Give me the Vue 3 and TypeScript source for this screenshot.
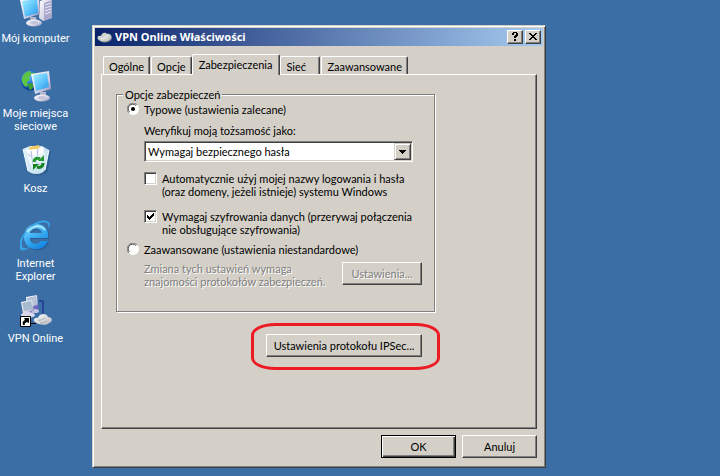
<script setup lang="ts">
import { ref } from 'vue'

interface Shortcut {
  id: string
  label: string
}

const shortcuts: Shortcut[] = [
  { id: 'computer', label: 'Mój komputer' },
  { id: 'network', label: 'Moje miejsca sieciowe' },
  { id: 'bin', label: 'Kosz' },
  { id: 'explorer', label: 'Internet Explorer' },
  { id: 'vpn', label: 'VPN Online' },
]

const tabs: string[] = ['Ogólne', 'Opcje', 'Zabezpieczenia', 'Sieć', 'Zaawansowane']
const activeTab = ref('Zabezpieczenia')
const mode = ref<'typical' | 'advanced'>('typical')
const identity = ref('secured')
const useWindowsLogon = ref(false)
const requireEncryption = ref(true)
</script>

<template>
  <div class="desktop">
    <svg class="defs" aria-hidden="true">
      <defs>
        <linearGradient id="screen" x1="0" y1="0" x2="1" y2="1">
          <stop offset="0" stop-color="#a8f0ff" />
          <stop offset="0.5" stop-color="#62c8fb" />
          <stop offset="1" stop-color="#2b93ee" />
        </linearGradient>
        <linearGradient id="metal" x1="0" y1="0" x2="1" y2="1">
          <stop offset="0" stop-color="#ffffff" />
          <stop offset="0.6" stop-color="#d5d5e6" />
          <stop offset="1" stop-color="#8583ad" />
        </linearGradient>
        <radialGradient id="globe" cx="0.4" cy="0.3" r="0.7">
          <stop offset="0" stop-color="#66bdf8" />
          <stop offset="0.6" stop-color="#1c67cf" />
          <stop offset="1" stop-color="#0b2f86" />
        </radialGradient>
        <linearGradient id="glass" x1="0" y1="0" x2="1" y2="1">
          <stop offset="0" stop-color="#e9f7fd" />
          <stop offset="1" stop-color="#a9cfe6" />
        </linearGradient>
        <linearGradient id="blueE" x1="0" y1="0" x2="0.6" y2="1">
          <stop offset="0" stop-color="#9be3ff" />
          <stop offset="0.5" stop-color="#3fb2f4" />
          <stop offset="1" stop-color="#1687e0" />
        </linearGradient>
        <linearGradient id="cloud" x1="0" y1="0" x2="1" y2="1">
          <stop offset="0" stop-color="#ffffff" />
          <stop offset="1" stop-color="#b4b8bc" />
        </linearGradient>
      </defs>
    </svg>

    <nav class="shortcuts" aria-label="Pulpit">
      <a v-for="item in shortcuts" :key="item.id" class="shortcut" href="#">
        <svg class="picture" viewBox="0 0 32 32" aria-hidden="true">
          <template v-if="item.id === 'computer'">
            <path d="M20 6l8-3 4 2v18l-9 3-4-3z" fill="url(#metal)" />
            <path d="M24 8l8-3v18l-8 3z" fill="#aaa8cd" />
            <path d="M25 10l6-2M25 13l6-2M25 16l6-2M25 19l6-2" stroke="#e8e8f8" />
            <path d="M0 5l19-3 1 17-16 5z" fill="url(#metal)" />
            <path d="M2 6l15-2 1 14-13 4z" fill="url(#screen)" />
            <path d="M10 22h6l1 5h-6z" fill="#b7b6d2" />
            <ellipse cx="14" cy="28" rx="8" ry="3.5" fill="url(#metal)" />
            <ellipse cx="14" cy="27.5" rx="4" ry="1.5" fill="#c4c3dc" />
          </template>
          <template v-else-if="item.id === 'network'">
            <circle cx="10.5" cy="10.5" r="10" fill="url(#globe)" />
            <path d="M2 7c2-4 5-6 8-6l2 3-3 3 1 3-3 2 1 3-2 2c-3-2-5-6-4-10z" fill="#5fc443" />
            <path d="M13 2c3 1 5 3 6 5l-4 1-3-3zM8 14l4-1 2 3-3 4c-2 0-3-3-3-6z" fill="#3b9f31" />
            <path d="M11 4l18-3 2 18-16 5z" fill="url(#metal)" />
            <path d="M13 5l14-2 2 14-13 4z" fill="url(#screen)" />
            <path d="M20 22h6v5h-6z" fill="#b3b2d0" />
            <ellipse cx="22" cy="28" rx="8" ry="3.5" fill="url(#metal)" />
            <ellipse cx="22" cy="27.5" rx="4" ry="1.5" fill="#c4c3dc" />
          </template>
          <template v-else-if="item.id === 'bin'">
            <path d="M4 6l22-3 5 3-3 20c-3 5-15 6-19 2z" fill="#1d4372" opacity="0.35" />
            <path d="M3 4l7-3h12l7 4-4 20c-3 5-13 5-17 1z" fill="url(#glass)" />
            <path d="M9 2l10-2 2 10-11 2z" fill="#f5cb67" />
            <path d="M7 5l10-1 6-2 2 12-12 9-5-8z" fill="#ffffff" />
            <path d="M11 6l2 15M18 4l-2 15M8 9l12 11" stroke="#a9b1da" fill="none" />
            <path d="M3 4l5 7 8-1 13-5-4 20c-3 5-13 5-17 1z" fill="#dceff8" opacity="0.5" />
            <path d="M14 17c0-3 3-5 6-3" stroke="#24982f" stroke-width="3" fill="none" />
            <path d="M18 16h6v-6z" fill="#24982f" />
            <path d="M23 18c0 4-3 5-6 4" stroke="#15851f" stroke-width="3" fill="none" />
            <path d="M19 19h-6v6z" fill="#15851f" />
            <path d="M3 4l5 22M29 5l-4 20" stroke="#f5fdff" fill="none" />
          </template>
          <template v-else-if="item.id === 'explorer'">
            <path d="M10 18h18c3-18-24-19-24-1 0 15 20 16 24 4h-7c-4 5-11 3-11-3zm0-5c2-6 11-6 12 0z" fill="#153d73" opacity="0.4" fill-rule="evenodd" transform="translate(1 1)" />
            <path d="M10 18h18c3-18-24-19-24-1 0 15 20 16 24 4h-7c-4 5-11 3-11-3zm0-5c2-6 11-6 12 0z" fill="url(#blueE)" fill-rule="evenodd" />
            <path d="M9 7c8-7 17-8 20-5 1 1 1 4-1 7 1-3 0-5-1-6-3-2-10 0-16 5-7 6-10 13-9 18 1 4 6 2 9 0-4 4-9 6-11 3-3-5 2-15 9-22z" fill="#36a5e7" />
            <path d="M7 12c4-6 13-8 18-2" stroke="#b9eeff" fill="none" stroke-width="1.5" />
          </template>
          <template v-else>
            <path d="M19 6h4v13" stroke="#101a8f" fill="none" />
            <path d="M6 2l11-2 1 11-11 3z" fill="url(#metal)" />
            <path d="M7 3l9-2 1 8-9 2z" fill="#b5c4d6" />
            <path d="M13 11l5-1 1 4-5 3z" fill="#6f66c4" />
            <ellipse cx="15" cy="16" rx="4" ry="2" fill="#c5c4e3" />
            <path d="M1 7l11-2 2 11-11 3z" fill="url(#metal)" />
            <path d="M2 8l9-2 2 8-9 2z" fill="#a8bbce" />
            <path d="M7 18l5-2v4l-4 1z" fill="#7770c5" />
            <ellipse cx="8" cy="20" rx="7" ry="3" fill="#d9d8ec" />
            <path d="M11 28.5h5" stroke="#000000" />
            <path d="M15 27c-3-2 0-5 3-4 1-5 9-5 10-1 5 0 5 5 1 6-2 3-11 2-14-1z" fill="url(#cloud)" />
            <path d="M18 25c3 1 5-1 7-2M20 28c3 0 5-1 7-2" stroke="#aab0b5" fill="none" />
            <path d="M0.5 21.5h10v10h-10z" fill="#ffffff" stroke="#000000" />
            <path d="M3 30c-1-3 0-4 2-5l-1-2h5v5l-2-1c-2 1-3 2-2 3z" fill="#000000" />
          </template>
        </svg>
        <span class="caption">{{ item.label }}</span>
      </a>
    </nav>

    <main class="window" role="dialog" aria-labelledby="window-title">
      <header class="titlebar">
        <svg class="title-icon" viewBox="0 0 16 16" aria-hidden="true">
          <path d="M2 11c-3-2-1-5 2-4 1-4 5-4 6-2 4-1 5 3 3 5-2 3-9 3-11 1z" fill="#8f9494" transform="translate(1 1)" />
          <path d="M2 11c-3-2-1-5 2-4 1-4 5-4 6-2 4-1 5 3 3 5-2 3-9 3-11 1z" fill="#d0d4d0" />
          <path d="M4 10c3 0 5-2 7-4" stroke="#f4f6f4" fill="none" />
        </svg>
        <h1 id="window-title" class="title">VPN Online Właściwości</h1>
        <button class="caption-button" type="button" aria-label="Pomoc">
          <svg viewBox="0 0 10 10" aria-hidden="true" shape-rendering="crispEdges">
            <path d="M3 0h4v1h1v3h-1v1h-1v1h-2v-2h1v-1h1v-2h-2v2h-2v-2h1zM4 7h2v2h-2z" />
          </svg>
        </button>
        <button class="caption-button" type="button" aria-label="Zamknij">
          <svg viewBox="0 0 10 10" aria-hidden="true" shape-rendering="crispEdges">
            <path d="M1 1h2v1h1v1h2v-1h1v-1h2v1h-1v1h-1v1h-1v1h1v1h1v1h1v1h-2v-1h-1v-1h-2v1h-1v1h-2v-1h1v-1h1v-1h1v-1h-1v-1h-1v-1h-1z" />
          </svg>
        </button>
      </header>

      <div class="body">
        <div class="tabs" role="tablist">
          <button
            v-for="tab in tabs"
            :key="tab"
            class="tab"
            :class="{ active: tab === activeTab }"
            type="button"
            role="tab"
            :aria-selected="tab === activeTab"
            @click="activeTab = tab"
          >{{ tab }}</button>
        </div>

        <section class="pane" role="tabpanel">
          <fieldset class="group">
            <legend>Opcje zabezpieczeń</legend>

            <label class="choice">
              <span class="mark">
                <input v-model="mode" type="radio" name="mode" value="typical" />
                <svg viewBox="0 0 12 12" aria-hidden="true">
                  <circle cx="6" cy="6" r="6" fill="#ffffff" />
                  <path d="M1.8 10.2a5.5 5.5 0 0 1 8.4-8.4" stroke="#808080" fill="none" />
                  <path d="M2.5 9a4.5 4.5 0 0 1 6.5-6.5" stroke="#404040" fill="none" />
                  <circle class="tick" cx="6" cy="6" r="2" />
                </svg>
              </span>
              <span>Typowe (ustawienia zalecane)</span>
            </label>

            <div class="nested identity">
              <label for="identity">Weryfikuj moją tożsamość jako:</label>
              <span class="combo">
                <select id="identity" v-model="identity">
                  <option value="secured">Wymagaj bezpiecznego hasła</option>
                </select>
                <span class="drop">
                  <svg viewBox="0 0 7 4" aria-hidden="true" shape-rendering="crispEdges">
                    <path d="M0 0h7v1h-1v1h-1v1h-1v1h-1v-1h-1v-1h-1v-1h-1z" />
                  </svg>
                </span>
              </span>
            </div>

            <label class="nested choice check">
              <span class="mark">
                <input v-model="useWindowsLogon" type="checkbox" />
                <svg viewBox="0 0 13 13" aria-hidden="true" shape-rendering="crispEdges">
                  <path class="tick" d="M3 5v3l2 2 5-5v-3l-5 5z" />
                </svg>
              </span>
              <span>Automatycznie użyj mojej nazwy logowania i hasła<br />(oraz domeny, jeżeli istnieje) systemu Windows</span>
            </label>

            <label class="nested choice check">
              <span class="mark">
                <input v-model="requireEncryption" type="checkbox" />
                <svg viewBox="0 0 13 13" aria-hidden="true" shape-rendering="crispEdges">
                  <path class="tick" d="M3 5v3l2 2 5-5v-3l-5 5z" />
                </svg>
              </span>
              <span>Wymagaj szyfrowania danych (przerywaj połączenia<br />nie obsługujące szyfrowania)</span>
            </label>

            <label class="choice">
              <span class="mark">
                <input v-model="mode" type="radio" name="mode" value="advanced" />
                <svg viewBox="0 0 12 12" aria-hidden="true">
                  <circle cx="6" cy="6" r="6" fill="#ffffff" />
                  <path d="M1.8 10.2a5.5 5.5 0 0 1 8.4-8.4" stroke="#808080" fill="none" />
                  <path d="M2.5 9a4.5 4.5 0 0 1 6.5-6.5" stroke="#404040" fill="none" />
                  <circle class="tick" cx="6" cy="6" r="2" />
                </svg>
              </span>
              <span>Zaawansowane (ustawienia niestandardowe)</span>
            </label>

            <div class="nested advanced">
              <p class="hint">Zmiana tych ustawień wymaga<br />znajomości protokołów zabezpieczeń.</p>
              <button class="push" type="button" :disabled="mode !== 'advanced'">Ustawienia...</button>
            </div>
          </fieldset>

          <div class="ipsec">
            <button class="push wide" type="button">Ustawienia protokołu IPSec...</button>
          </div>
        </section>

        <footer class="actions">
          <button class="push default" type="button">OK</button>
          <button class="push" type="button">Anuluj</button>
        </footer>
      </div>
    </main>
  </div>
</template>

<style>
body {
  background: #3a6ea5;
}
</style>

<style scoped>
.desktop {
  display: flex;
  align-items: flex-start;
  gap: 21px;
  min-height: 100vh;
  overflow: hidden;
  background: #3a6ea5;
  color: #000000;
  font: 11px/13px Lato, Arial, sans-serif;
}

.desktop *,
.desktop *::before,
.desktop *::after {
  box-sizing: border-box;
}

.defs {
  position: absolute;
  width: 0;
  height: 0;
}

button {
  margin: 0;
  color: inherit;
  font: inherit;
}

/* desktop shortcuts */
.shortcuts {
  display: grid;
  flex: 0 0 71px;
  grid-auto-rows: 75px;
  margin-top: -5px;
}

.shortcut {
  display: flex;
  flex-direction: column;
  align-items: center;
  gap: 5px;
  color: #ffffff;
  font-family: Roboto, Tahoma, sans-serif;
  text-align: center;
  text-decoration: none;
}

.picture {
  flex: none;
  width: 32px;
  height: 32px;
}

/* window frame */
.window {
  flex: 0 1 454px;
  min-width: 0;
  margin-top: 25px;
  padding: 1px;
  border: 1px solid;
  border-color: #d4d0c8 #404040 #404040 #d4d0c8;
  background: #d4d0c8;
  box-shadow: inset 1px 1px #ffffff, inset -1px -1px #808080;
}

.titlebar {
  display: flex;
  align-items: center;
  gap: 2px;
  height: 18px;
  margin: 1px 1px 0;
  padding: 0 2px;
  background: linear-gradient(90deg, #0a246a, #a6caf0);
}

.title-icon {
  flex: none;
  width: 16px;
  height: 16px;
}

.title {
  flex: 1;
  margin: 0;
  overflow: hidden;
  color: #ffffff;
  font: bold 11px/16px "Noto Sans", Tahoma, sans-serif;
  white-space: nowrap;
}

.caption-button {
  display: grid;
  flex: none;
  place-items: center;
  width: 16px;
  height: 14px;
  padding: 0;
  border: 1px solid;
  border-color: #ffffff #404040 #404040 #ffffff;
  background: #d4d0c8;
  box-shadow: inset -1px -1px #808080;
}

.caption-button svg {
  width: 10px;
  height: 10px;
}

.body {
  padding: 8px 7px;
}

/* tabs */
.tabs {
  display: flex;
  align-items: flex-end;
  gap: 1px;
  height: 20px;
  padding: 0 2px;
}

.tab {
  min-width: 40px;
  height: 18px;
  padding: 1px 5px 0;
  border: 1px solid;
  border-width: 1px 1px 0;
  border-color: #ffffff #404040 #ffffff #ffffff;
  border-radius: 2px 2px 0 0;
  background: #d4d0c8;
  box-shadow: inset -1px 0 #808080;
  text-align: left;
  white-space: nowrap;
}

.tab.active {
  z-index: 1;
  height: 21px;
  margin: 0 -1px -1px;
  padding: 0 7px 2px 6px;
}

.pane {
  padding: 13px 101px 71px 14px;
  border: 1px solid;
  border-color: #ffffff #404040 #404040 #ffffff;
  box-shadow: inset -1px -1px #808080;
}

/* security options */
.group {
  display: flex;
  flex-direction: column;
  margin: 0;
  padding: 2px 12px 23px 10px;
  border: 1px solid #808080;
  box-shadow: 1px 1px #ffffff, inset 1px 1px #ffffff;
}

legend {
  margin-left: -4px;
  padding: 0 2px;
  background: #d4d0c8;
}

.choice {
  display: flex;
  align-items: flex-start;
  gap: 5px;
}

.nested {
  margin-left: 17px;
}

.identity {
  display: grid;
  gap: 4px;
  margin-top: 8px;
  margin-right: 9px;
}

.check {
  margin-top: 10px;
}

.check + .check {
  margin-top: 12px;
}

.check + .choice:not(.check) {
  margin-top: 7px;
}

.mark {
  display: grid;
  flex: none;
}

.mark > * {
  grid-area: 1 / 1;
}

.mark input {
  width: 12px;
  height: 12px;
  margin: 0;
  appearance: none;
}

.mark svg {
  width: 12px;
  height: 12px;
  pointer-events: none;
}

.check .mark input {
  width: 13px;
  height: 13px;
  border: 1px solid;
  border-color: #808080 #ffffff #ffffff #808080;
  background: #ffffff;
  box-shadow: inset 1px 1px #404040, inset -1px -1px #d4d0c8;
}

.check .mark svg {
  width: 13px;
  height: 13px;
}

.tick {
  visibility: hidden;
}

input:checked + svg .tick {
  visibility: visible;
}

.combo {
  display: grid;
  grid-template-columns: 1fr 17px;
  height: 21px;
  padding: 1px;
  border: 1px solid;
  border-color: #808080 #ffffff #ffffff #808080;
  background: #ffffff;
  box-shadow: inset 1px 1px #404040, inset -1px -1px #d4d0c8;
}

.combo select {
  grid-area: 1 / 1 / 2 / 3;
  min-width: 0;
  padding: 0 18px 0 2px;
  border: 0;
  background: transparent;
  color: inherit;
  font: inherit;
  appearance: none;
}

.drop {
  display: grid;
  grid-area: 1 / 2;
  place-items: center;
  border: 1px solid;
  border-color: #d4d0c8 #404040 #404040 #d4d0c8;
  background: #d4d0c8;
  box-shadow: inset 1px 1px #ffffff, inset -1px -1px #808080;
  pointer-events: none;
}

.drop svg {
  width: 7px;
  height: 4px;
}

.advanced {
  display: flex;
  justify-content: space-between;
  margin-top: 6px;
}

.hint {
  margin: 0;
  color: #808080;
  text-shadow: 1px 1px #ffffff;
  white-space: nowrap;
}

/* push buttons */
.push {
  min-width: 75px;
  height: 23px;
  padding: 0 4px;
  border: 1px solid;
  border-color: #ffffff #404040 #404040 #ffffff;
  background: #d4d0c8;
  box-shadow: inset -1px -1px #808080;
  white-space: nowrap;
}

.push:disabled {
  color: #808080;
  text-shadow: 1px 1px #ffffff;
}

.push.default {
  border-color: #000000;
  box-shadow: inset 1px 1px #ffffff, inset -1px -1px #404040, inset -2px -2px #808080;
}

.advanced .push {
  min-width: 80px;
}

.ipsec {
  display: flex;
  justify-content: flex-end;
  margin: 22px 13px 0 0;
}

.wide {
  position: relative;
  min-width: 156px;
}

.wide::after {
  position: absolute;
  inset: -12px -19px -14px -16px;
  border: 3px solid #ed1c24;
  border-radius: 24px / 12px;
  content: "";
  pointer-events: none;
}

.actions {
  display: flex;
  justify-content: flex-end;
  gap: 6px;
  padding-top: 6px;
}
</style>
